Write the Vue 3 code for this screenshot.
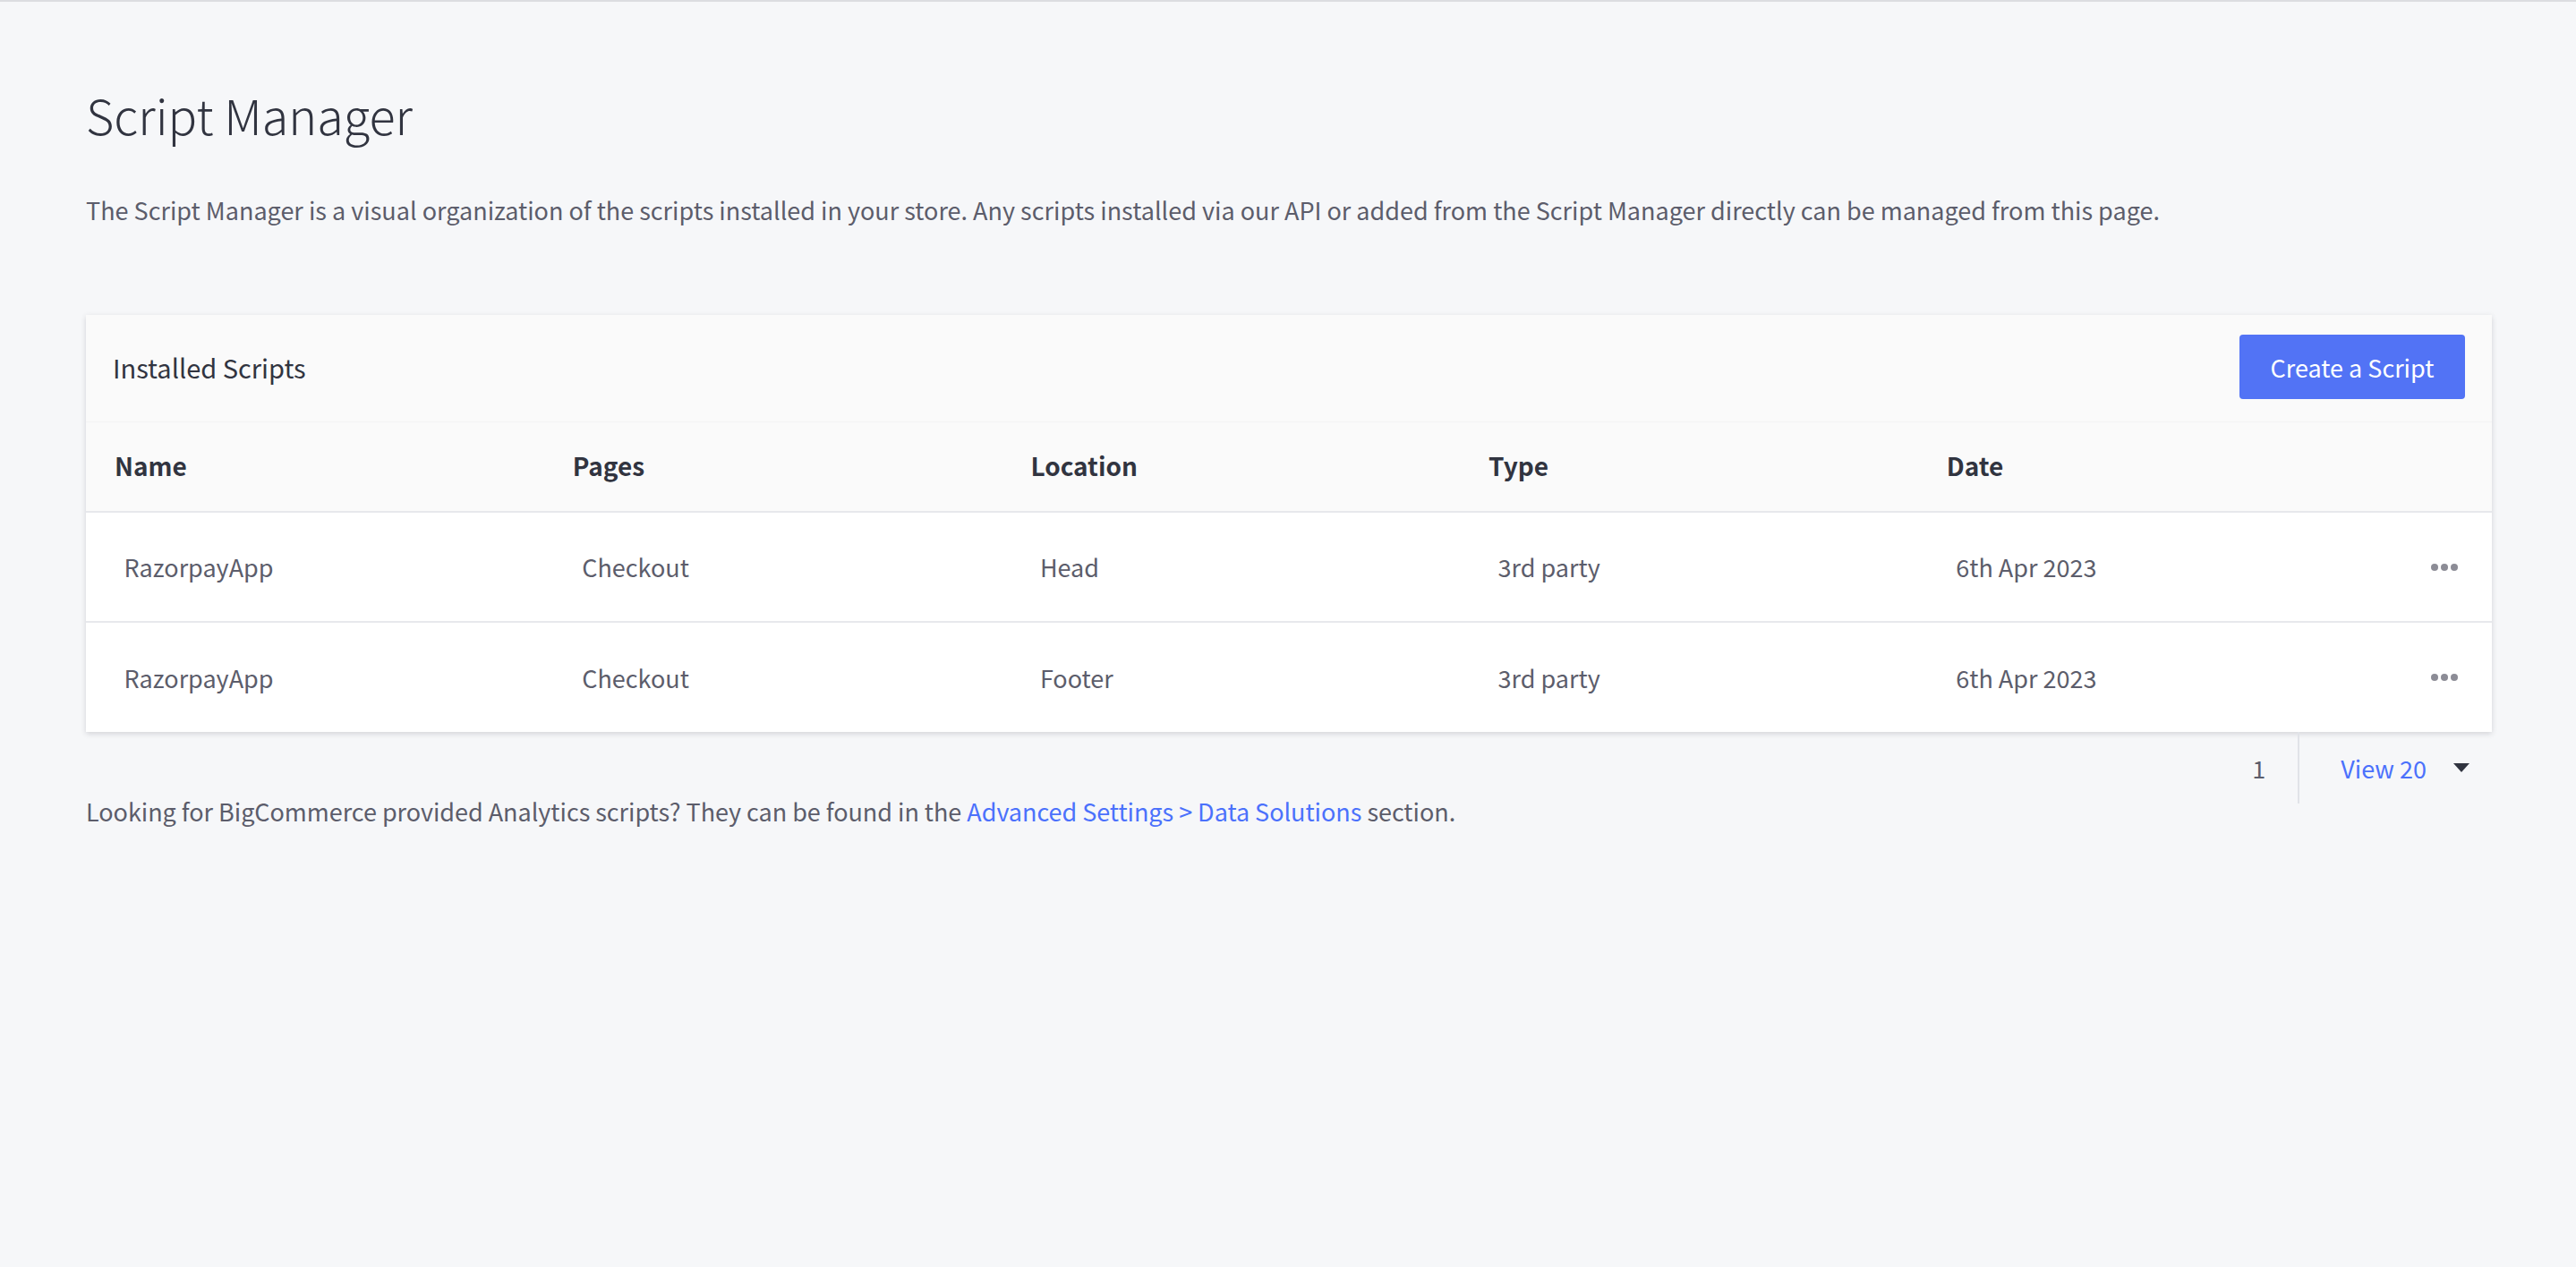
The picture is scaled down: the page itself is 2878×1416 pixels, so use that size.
<script setup>
const rows = [
  { name: 'RazorpayApp', pages: 'Checkout', location: 'Head', type: '3rd party', date: '6th Apr 2023' },
  { name: 'RazorpayApp', pages: 'Checkout', location: 'Footer', type: '3rd party', date: '6th Apr 2023' }
]
const heads = ['Name', 'Pages', 'Location', 'Type', 'Date']
</script>

<template>
  <main class="page">
    <h1 class="title">Script Manager</h1>
    <p class="intro">The Script Manager is a visual organization of the scripts installed in your store. Any scripts installed via our API or added from the Script Manager directly can be managed from this page.</p>

    <section class="card">
      <header class="card-head">
        <h2 class="card-title">Installed Scripts</h2>
        <button class="primary" type="button">Create a Script</button>
      </header>
      <div class="row thead">
        <div v-for="h in heads" :key="h" class="th">{{ h }}</div>
      </div>
      <div v-for="(r, i) in rows" :key="i" class="row tbody">
        <div class="td">{{ r.name }}</div>
        <div class="td">{{ r.pages }}</div>
        <div class="td">{{ r.location }}</div>
        <div class="td">{{ r.type }}</div>
        <div class="td">{{ r.date }}</div>
        <div class="dots"><i></i><i></i><i></i></div>
      </div>
    </section>

    <div class="below">
      <p class="note">Looking for BigCommerce provided Analytics scripts? They can be found in the <a class="link" href="#">Advanced Settings &gt; Data Solutions</a> section.</p>
      <div class="pager">
        <span class="num">1</span>
        <div class="view">
          <a class="link" href="#">View 20</a>
          <span class="caret"></span>
        </div>
      </div>
    </div>
  </main>
</template>

<style>
html, body { margin: 0; background: #f6f7f9; }
</style>

<style scoped>
.page {
  box-sizing: border-box;
  min-height: 1416px;
  padding: 0 94px 0 96px;
  background: #f6f7f9;
  border-top: 2px solid #dcdde1;
  font-family: "Noto Sans CJK SC", "Noto Sans", sans-serif;
  color: #5c5d6b;
}
.title {
  margin: 0;
  padding-top: 87px;
  font-size: 54px;
  line-height: 78px;
  font-weight: 300;
  color: #313440;
}
.intro {
  margin: 48px 0 0;
  font-size: 27px;
  line-height: 40px;
}
.card {
  margin-top: 97px;
  background: #fff;
  box-shadow: 0 2px 6px rgba(49, 52, 64, 0.18);
}
.card-head {
  height: 120px;
  box-sizing: border-box;
  padding: 22px 30px 0;
  display: flex;
  justify-content: space-between;
  align-items: flex-start;
  background: #fafafa;
  border-bottom: 1px solid #f3f3f4;
}
.card-title {
  margin: 16px 0 0;
  font-size: 29px;
  line-height: 40px;
  font-weight: 400;
  color: #313440;
}
.primary {
  width: 252px;
  height: 72px;
  border: 0;
  border-radius: 4px;
  background: #5273f5;
  color: #fff;
  font: inherit;
  font-size: 27px;
}
.row {
  display: grid;
  grid-template-columns: repeat(5, 511.7px) 1fr;
  align-items: center;
}
.thead {
  height: 101px;
  box-sizing: border-box;
  background: #fafafa;
  border-bottom: 2px solid #e7e8ec;
}
.th {
  padding-left: 32px;
  padding-bottom: 3px;
  font-size: 28px;
  font-weight: 600;
  color: #313440;
}
.tbody {
  height: 121px;
  box-sizing: border-box;
}
.tbody + .tbody {
  height: 124px;
  border-top: 2px solid #e7e8ec;
}
.td {
  padding-left: 42.5px;
  font-size: 27px;
}
.dots {
  display: flex;
  justify-content: flex-end;
  gap: 3px;
  padding-right: 38px;
}
.dots i {
  width: 8px;
  height: 8px;
  border-radius: 50%;
  background: #8c8c96;
}
.below {
  display: flex;
  justify-content: space-between;
  align-items: flex-start;
}
.note {
  margin: 69px 0 0;
  font-size: 27px;
  line-height: 40px;
  letter-spacing: -0.035px;
}
.link {
  color: #4b71fc;
  text-decoration: none;
}
.pager {
  display: flex;
  height: 80px;
  align-items: center;
  font-size: 27px;
}
.num { margin-right: 36px; }
.view {
  display: flex;
  align-items: center;
  height: 80px;
  padding-left: 46px;
  padding-right: 25px;
  border-left: 2px solid #e1e3e8;
}
.caret {
  width: 0;
  height: 0;
  margin-left: 30px;
  border-left: 9px solid transparent;
  border-right: 9px solid transparent;
  border-top: 10px solid #313440;
}
</style>
